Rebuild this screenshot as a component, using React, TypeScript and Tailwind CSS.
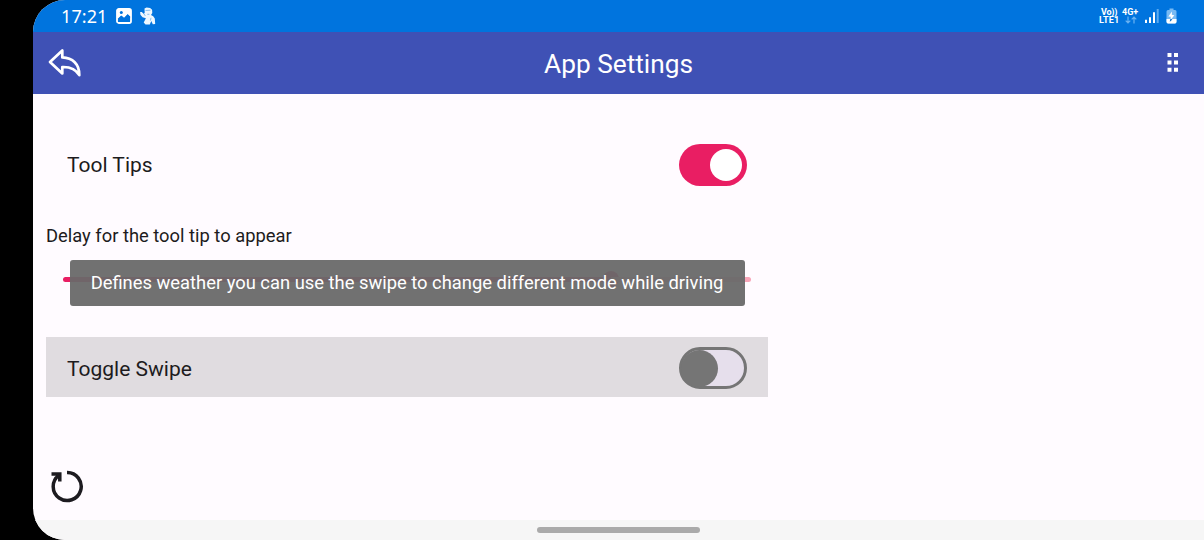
import type { ReactNode } from "react";

function StatusBar() {
  return (
    <div className="flex h-8 shrink-0 items-center bg-[#0074de] pl-[28px] pr-[27px] text-white">
      <span className="w-[55px] font-['Noto_Sans',sans-serif] text-[18px] leading-8 tracking-[0.1px]">17:21</span>
      <svg className="h-4 w-4" viewBox="0 0 16 16" fill="none">
        <rect x="1" y="1" width="14" height="14" rx="1.8" stroke="white" strokeWidth="1.8" />
        <path d="M1 1h14v8.5l-3.3-3.2-3.6 3.8-2.5-2.4L1 12z" fill="white" />
        <circle cx="5.3" cy="4.6" r="1.5" fill="#0074de" />
        <path d="M2.2 11.3l3-2.9 2.8 2.5 3.7-3.8 2.3 2.3" stroke="#0074de" strokeWidth="1.3" />
      </svg>
      <svg className="ml-[7px] h-[18px] w-[18px]" viewBox="0 0 18 18" fill="#edf7ff">
        <path d="M5.5 1.600l2.100-1 3.500.3 2 1.800.2 3.200-1.300 2.200 2.200 1.200 1.600 2.100.4 5.500-2.400.3-1.500-3.300-1.500 3.600-4.300-.1-1.800-1.800 2.200-4.300-3.300-1-2.200-2.500-.3-2.700 1.700-.2 2 2 .9-1.200z" />
        <path d="M6.500 3.500l5-.3M8.300 7.300h2.100M5 6.900l1.300 2M12 10.800l-.6 2.800" stroke="#6db1ea" strokeWidth=".8" fill="none" />
      </svg>
      <div className="ml-auto flex items-center font-['Roboto',sans-serif] font-bold">
        <div className="flex w-[23px] flex-col text-[9px] leading-[8px]">
          <span className="pl-[1px] tracking-[-0.2px]">Vo))</span>
          <span className="-ml-px tracking-[0.2px]">LTE1</span>
        </div>
        <div className="flex w-[22px] flex-col items-start text-[9px] leading-[8px]">
          <span className="-ml-px">4G+</span>
          <svg className="ml-[2px] h-2 w-3" viewBox="0 0 12 8" fill="none" stroke="#69b2f2" strokeWidth="1.2">
            <path d="M3 .4v6.600M.7 4.700L3 7l2.300-2.300M9 7.400V1M6.700 3.300L9 1l2.300 2.300" />
          </svg>
        </div>
        <svg className="h-4 w-[14px]" viewBox="0 0 14 16">
          <path d="M0 11.700h2V15H0zM4 9.300h2V15H4zM8 4.200h2V15H8z" fill="white" />
          <path d="M11.700 1h2v14h-2z" fill="#5babf0" />
        </svg>
        <svg className="ml-[7px] h-4 w-[11px]" viewBox="0 0 11 16">
          <path d="M3.500.5h4V2H9q1.500 0 1.500 1.500v10q0 2-1.500 2H2q-1.500 0-1.500-2v-10Q.5 2 2 2h1.500z" fill="#78baf3" />
          <path d="M.5 11h10v2.500q0 2-1.500 2H2q-1.500 0-1.500-2z" fill="white" />
          <path d="M6 3.500L2.300 8.400l2.500.4-.5 3.800 4-5.400-2.500-.4z" fill="white" />
          <path d="M4.800 10.900l-.5 2.300 1.700-2.200" fill="none" stroke="#0869c2" strokeWidth=".9" />
        </svg>
      </div>
    </div>
  );
}

function AppBar() {
  return (
    <header className="grid h-[62px] shrink-0 grid-cols-[1fr_auto_1fr] items-center bg-[#3f51b5] px-[15px] text-white">
      <button aria-label="Back" className="w-[34px]">
        <svg className="block h-[31px] w-[34px]" viewBox="0 0 34 31" fill="none" stroke="white" strokeWidth="2.700" strokeLinejoin="round">
          <path d="M2 14L14.300 2.500v6.900C24.500 9.800 31.500 16 31.300 27.200C27.500 20.600 22 18.700 14.300 19v6.500z" />
        </svg>
      </button>
      <h1 className="pt-[1px] text-[26.250px] leading-8">App Settings</h1>
      <button aria-label="More" className="ml-auto mr-[10px]">
        <svg className="mb-[1px] block h-[19px] w-[12px]" viewBox="0 0 12 19" fill="white">
          <path d="M.5 0h4v4h-4zM7 0h4v4H7zM.5 7.500h4v4h-4zM7 7.500h4v4H7zM.5 14.800h4v4h-4zM7 14.800h4v4H7z" />
        </svg>
      </button>
    </header>
  );
}

function Toggle({ on }: { on: boolean }) {
  return on ? (
    <span className="flex h-[42px] w-[68px] items-center justify-end rounded-full bg-[#e91e63] pr-[5px]">
      <span className="h-8 w-8 rounded-full bg-white" />
    </span>
  ) : (
    <span className="flex h-[42px] w-[68px] items-center rounded-full border-[3px] border-[#757575] bg-[#e6dfec]">
      <span className="-ml-px h-[37px] w-[37px] shrink-0 rounded-full bg-[#757575]" />
    </span>
  );
}

function SettingRow({ label, children, pressed = false }: { label: string; children: ReactNode; pressed?: boolean }) {
  return (
    <div className={`flex h-[60px] items-center justify-between pl-[21px] pr-[21px] ${pressed ? "bg-[#e0dce0]" : ""}`}>
      <span className={`text-[21px] leading-7 ${pressed ? "pt-[3px]" : "pt-[2px]"}`}>{label}</span>
      <span className="pt-[2px]">{children}</span>
    </div>
  );
}

export default function App() {
  return (
    <div className="h-[540px] w-[1204px] overflow-hidden bg-black pl-[33px] font-['Roboto',sans-serif] text-[#1d1b20]">
      <div className="flex h-full flex-col overflow-hidden rounded-l-[32px] bg-[#fffbff]">
        <StatusBar />
        <AppBar />
        <main className="flex w-[735px] flex-1 flex-col pl-[13px] pt-[40px]">
          <SettingRow label="Tool Tips"><Toggle on /></SettingRow>
          <p className="mt-[30px] h-6 text-[18.350px] leading-6">Delay for the tool tip to appear</p>
          <div className="relative mt-[11px] flex h-[46px] items-start pl-[17px] pr-[17px] pt-[17.500px]">
            <div className="flex h-[5px] w-full items-center overflow-visible">
              <span className="h-[5px] w-[548px] rounded-l-full bg-[#e91e63]" />
              <span className="-mx-[8px] h-4 w-4 shrink-0 rounded-full bg-[#e91e63]" />
              <span className="h-[5px] flex-1 rounded-r-full bg-[#f8a5b8]" />
            </div>
            <div role="tooltip" className="absolute left-[23.500px] top-[0.500px] flex h-[46px] w-[675px] items-center justify-center rounded-[3px] bg-[#696969]/95 pt-[1px] text-[18.370px] text-white">
              <span className="whitespace-nowrap">Defines weather you can use the swipe to change different mode while driving</span>
            </div>
          </div>
          <div className="mt-[32px]">
            <SettingRow label="Toggle Swipe" pressed><Toggle on={false} /></SettingRow>
          </div>
          <button aria-label="Reset" className="ml-[4px] mt-[73px] h-[33px] w-[34px]">
            <svg className="block h-[33px] w-[34px]" viewBox="0 0 34 33" fill="none" stroke="#1d1b20" strokeWidth="3.500">
              <path d="M17 2.500A14 14 0 1 1 8.800 5.300M1.500 4h8.300v7.500" />
            </svg>
          </button>
        </main>
        <footer className="flex h-5 shrink-0 items-center justify-center bg-[#f6f6f6]">
          <span className="h-[6px] w-[163px] rounded-full bg-[#aaaaaa]" />
        </footer>
      </div>
    </div>
  );
}
